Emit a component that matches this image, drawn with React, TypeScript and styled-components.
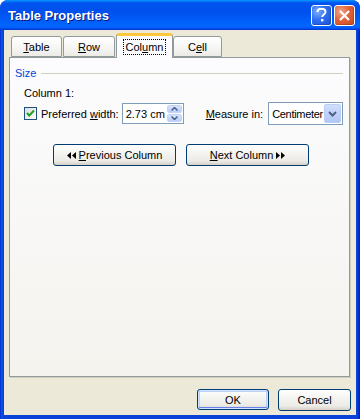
import { FC } from 'react';
import styled, { createGlobalStyle } from 'styled-components';

const Global = createGlobalStyle`
	body {
		margin: 0;
		background: #ffffff;
		font-family: 'Liberation Sans', Arial, sans-serif;
		font-size: 11px;
		color: #000;
	}
	u {
		text-decoration: underline;
		text-underline-offset: 1px;
	}
`;

const Window = styled.div`
	width: 360px;
	height: 419px;
	display: flex;
	flex-direction: column;
	border-radius: 8px 8px 0 0;
	overflow: hidden;
	background: linear-gradient(to right, #0019cf 0, #0855dd 1px, #0855dd 2px, #0842d6 3px, #0842d6 357px, #0019cf 360px);
`;

const TitleBar = styled.div`
	height: 30px;
	flex: none;
	display: flex;
	align-items: center;
	padding: 0 5px 0 8px;
	background: linear-gradient(
		to bottom,
		#0997ff 0%,
		#0053ee 10%,
		#0050ee 40%,
		#0066ff 86%,
		#005bff 93%,
		#003dd7 97%,
		#003dd7 100%
	);
`;

const Title = styled.div`
	flex: 1;
	color: #fff;
	font-weight: bold;
	font-size: 13px;
	text-shadow: 1px 1px 0 #0a1883;
	padding-top: 1px;
`;

const CaptionButton = styled.div<{ $kind: 'help' | 'close' }>`
	width: 19px;
	height: 19px;
	border: 1px solid #fff;
	border-radius: 3px;
	display: flex;
	align-items: center;
	justify-content: center;
	margin-left: 2px;
	background: ${({ $kind }) =>
		$kind === 'close'
			? 'radial-gradient(circle at 30% 30%, #f0a58a 0%, #e2643b 45%, #c9441d 100%)'
			: 'radial-gradient(circle at 30% 30%, #7fb0ff 0%, #2d6ef0 45%, #1a4fd4 100%)'};
	box-shadow: inset -1px -1px 0 rgba(0, 0, 0, 0.15);
`;

const Client = styled.div`
	flex: 1;
	margin: 0 4px 4px;
	background: #ece9d8;
	display: flex;
	flex-direction: column;
	padding: 3px 6px 0 5px;
`;

const TabRow = styled.div`
	height: 24px;
	display: flex;
	align-items: flex-end;
	padding-left: 2px;
`;

const Tab = styled.div<{ $width: number; $active?: boolean }>`
	width: ${({ $width }) => $width}px;
	height: ${({ $active }) => ($active ? 25 : 21)}px;
	box-sizing: border-box;
	margin-right: ${({ $active }) => ($active ? 0 : 1)}px;
	margin-bottom: ${({ $active }) => ($active ? -1 : 0)}px;
	position: relative;
	z-index: ${({ $active }) => ($active ? 2 : 0)};
	display: flex;
	align-items: center;
	justify-content: center;
	border: 1px solid #919b9c;
	border-bottom: ${({ $active }) => ($active ? 'none' : '1px solid #919b9c')};
	border-top: ${({ $active }) => ($active ? '3px solid #ffc83c' : '1px solid #919b9c')};
	border-radius: 3px 3px 0 0;
	background: ${({ $active }) =>
		$active ? '#fcfcfe' : 'linear-gradient(to bottom, #ffffff 0%, #f7f7f5 50%, #ecebe6 100%)'};
	padding-top: ${({ $active }) => ($active ? 0 : 1)}px;
`;

const FocusText = styled.span`
	outline: 1px dotted #000;
	padding: 1px 2px;
`;

const Panel = styled.div`
	height: 320px;
	box-sizing: border-box;
	border: 1px solid #919b9c;
	background: linear-gradient(to bottom, #fcfcfe 0%, #f4f3ee 100%);
	box-shadow: 1px 1px 0 #d0cebf;
	padding: 8px 6px 0 5px;
	display: flex;
	flex-direction: column;
`;

const GroupHeader = styled.div`
	display: flex;
	align-items: center;
	height: 13px;
	color: #0046d5;
	gap: 5px;

	&::after {
		content: '';
		flex: 1;
		border-top: 1px solid #d0d0bf;
		margin-top: 1px;
	}
`;

const GroupBody = styled.div`
	padding-left: 9px;
	display: flex;
	flex-direction: column;
`;

const Caption = styled.div`
	height: 13px;
	line-height: 13px;
	margin-top: 8px;
`;

const FieldRow = styled.div`
	display: flex;
	align-items: center;
	height: 23px;
	margin-top: 2px;
	white-space: nowrap;
`;

const Check = styled.div`
	flex: none;
	width: 11px;
	height: 11px;
	border: 1px solid #1c5180;
	background: linear-gradient(135deg, #dcdcd7 0%, #ffffff 100%);
	display: flex;
	align-items: center;
	justify-content: center;
	margin-right: 4px;
`;

const Label = styled.span<{ $gap?: number }>`
	margin-left: ${({ $gap }) => $gap ?? 0}px;
	white-space: nowrap;
`;

const Spinner = styled.div`
	flex: none;
	width: 62px;
	height: 21px;
	box-sizing: border-box;
	border: 1px solid #7f9db9;
	background: #fff;
	display: flex;
	align-items: center;
	margin-left: 3px;
	padding-left: 3px;
`;

const SpinValue = styled.span`
	flex: 1;
	white-space: nowrap;
`;

const SpinButtons = styled.div`
	flex: none;
	width: 15px;
	height: 17px;
	margin-right: 1px;
	display: flex;
	flex-direction: column;
	gap: 1px;
`;

const SpinHalf = styled.div`
	flex: 1;
	border-radius: 2px;
	background: linear-gradient(to bottom, #d6e3fd, #b9cdf8);
	border: 1px solid #c3d3fd;
	box-sizing: border-box;
	display: flex;
	align-items: center;
	justify-content: center;
`;

const Select = styled.div`
	flex: none;
	width: 75px;
	height: 23px;
	box-sizing: border-box;
	border: 1px solid #7f9db9;
	background: #fff;
	display: flex;
	align-items: center;
	margin-left: 5px;
	padding: 0 1px 0 3px;
`;

const SelectValue = styled.span`
	flex: 1;
	overflow: hidden;
	white-space: nowrap;
	letter-spacing: -0.3px;
`;

const DropButton = styled.div`
	flex: none;
	width: 17px;
	height: 19px;
	border-radius: 2px;
	background: linear-gradient(to bottom, #d0ddfc, #b2c7f6);
	border: 1px solid #bccdf9;
	box-sizing: border-box;
	display: flex;
	align-items: center;
	justify-content: center;
`;

const NavRow = styled.div`
	display: flex;
	gap: 10px;
	margin-top: 19px;
	padding-left: 38px;
`;

const Button = styled.div<{ $width: number; $default?: boolean }>`
	width: ${({ $width }) => $width}px;
	height: ${({ $default }) => ($default ? 21 : 22)}px;
	box-sizing: border-box;
	border: 1px solid #003c74;
	border-radius: 3px;
	background: linear-gradient(to bottom, #ffffff 0%, #f4f4f0 40%, #ecebe6 80%, #d6d0c5 100%);
	box-shadow: ${({ $default }) =>
		$default ? 'inset 0 0 0 1px #cee7ff, inset 0 -1px 0 1px #6982ee, inset 0 0 0 2px #bccff7' : 'none'};
	display: flex;
	align-items: center;
	justify-content: center;
	gap: 3px;
`;

const Footer = styled.div`
	display: flex;
	justify-content: flex-end;
	gap: 9px;
	margin-top: 12px;
	margin-right: -1px;
`;

const DoubleArrow: FC<{ dir: 'left' | 'right' }> = ({ dir }) => (
	<svg width='9' height='7' viewBox='0 0 9 7'>
		{dir === 'left' ? (
			<path d='M0 3.5 L4 0 L4 7 Z M5 3.5 L9 0 L9 7 Z' fill='#000' />
		) : (
			<path d='M0 0 L4 3.5 L0 7 Z M5 0 L9 3.5 L5 7 Z' fill='#000' />
		)}
	</svg>
);

const App: FC = () => (
	<>
		<Global />
		<Window>
			<TitleBar>
				<Title>Table Properties</Title>
				<CaptionButton $kind='help'>
					<svg width='11' height='14' viewBox='0 0 11 14'>
						<path
							d='M1.5 4 C1.5 1.5 3.5 0.8 5.5 0.8 C7.8 0.8 9.5 2 9.5 4 C9.5 6.3 6.2 6.6 6.2 9'
							fill='none'
							stroke='#fff'
							strokeWidth='2'
						/>
						<rect x='5' y='11' width='2.4' height='2.4' fill='#fff' />
					</svg>
				</CaptionButton>
				<CaptionButton $kind='close'>
					<svg width='11' height='11' viewBox='0 0 11 11'>
						<path d='M1 1 L10 10 M10 1 L1 10' stroke='#fff' strokeWidth='2.2' />
					</svg>
				</CaptionButton>
			</TitleBar>
			<Client>
				<TabRow>
					<Tab $width={51}>
						<span>
							<u>T</u>able
						</span>
					</Tab>
					<Tab $width={52}>
						<span>
							<u>R</u>ow
						</span>
					</Tab>
					<Tab $width={57} $active>
						<FocusText>
							Col<u>u</u>mn
						</FocusText>
					</Tab>
					<Tab $width={49}>
						<span>
							C<u>e</u>ll
						</span>
					</Tab>
				</TabRow>
				<Panel>
					<GroupHeader>Size</GroupHeader>
					<GroupBody>
						<Caption>Column 1:</Caption>
						<FieldRow>
							<Check>
								<svg width='9' height='9' viewBox='0 0 9 9'>
									<path d='M1 4 L3.3 6.5 L8 1.5' fill='none' stroke='#21a121' strokeWidth='2' />
								</svg>
							</Check>
							<Label>
								Preferred <u>w</u>idth:
							</Label>
							<Spinner>
								<SpinValue>2.73 cm</SpinValue>
								<SpinButtons>
									<SpinHalf>
										<svg width='7' height='4' viewBox='0 0 7 4'>
											<path d='M0.5 3.5 L3.5 0.5 L6.5 3.5' fill='none' stroke='#4d6185' strokeWidth='1.5' />
										</svg>
									</SpinHalf>
									<SpinHalf>
										<svg width='7' height='4' viewBox='0 0 7 4'>
											<path d='M0.5 0.5 L3.5 3.5 L6.5 0.5' fill='none' stroke='#4d6185' strokeWidth='1.5' />
										</svg>
									</SpinHalf>
								</SpinButtons>
							</Spinner>
							<Label $gap={22}>
								<u>M</u>easure in:
							</Label>
							<Select>
								<SelectValue>Centimeter</SelectValue>
								<DropButton>
									<svg width='9' height='6' viewBox='0 0 9 6'>
										<path d='M1 1 L4.5 4.5 L8 1' fill='none' stroke='#4d6185' strokeWidth='2' />
									</svg>
								</DropButton>
							</Select>
						</FieldRow>
					</GroupBody>
					<NavRow>
						<Button $width={123}>
							<DoubleArrow dir='left' />
							<span>
								<u>P</u>revious Column
							</span>
						</Button>
						<Button $width={123}>
							<span>
								<u>N</u>ext Column
							</span>
							<DoubleArrow dir='right' />
						</Button>
					</NavRow>
				</Panel>
				<Footer>
					<Button $width={72} $default>
						OK
					</Button>
					<Button $width={73} $default={false}>
						Cancel
					</Button>
				</Footer>
			</Client>
		</Window>
	</>
);

export default App;
